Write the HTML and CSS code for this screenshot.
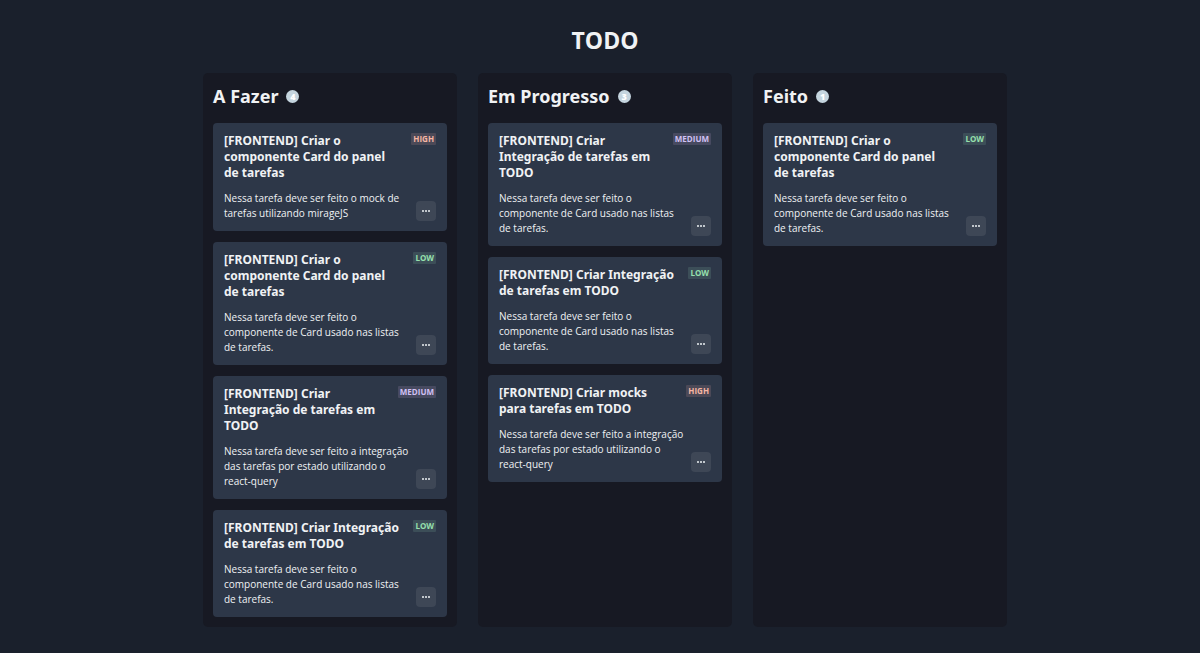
FILE: index.html
```html
<!DOCTYPE html>
<html lang="pt-BR">
<head>
<meta charset="utf-8">
<meta name="viewport" content="width=device-width, initial-scale=1">
<title>TODO</title>
<link rel="stylesheet" href="styles.css">
</head>
<body>
<main class="page">
  <h1 class="page-title">TODO</h1>
  <div class="board">
    <section class="column">
      <header class="column-header"><h2 class="column-title">A Fazer</h2><span class="count">4</span></header>
      <article class="card">
        <div class="card-text"><h3 class="card-title">[FRONTEND] Criar o<br>componente Card do panel<br>de tarefas</h3><p class="card-description">Nessa tarefa deve ser feito o mock de<br>tarefas utilizando mirageJS</p></div>
        <div class="card-side"><span class="badge badge-high">High</span><button class="menu-button" type="button" aria-label="Opções"><svg viewBox="0 0 20 20"><circle cx="7" cy="10" r="1"/><circle cx="10" cy="10" r="1"/><circle cx="13" cy="10" r="1"/></svg></button></div>
      </article>
      <article class="card">
        <div class="card-text"><h3 class="card-title">[FRONTEND] Criar o<br>componente Card do panel<br>de tarefas</h3><p class="card-description">Nessa tarefa deve ser feito o<br>componente de Card usado nas listas<br>de tarefas.</p></div>
        <div class="card-side"><span class="badge badge-low">Low</span><button class="menu-button" type="button" aria-label="Opções"><svg viewBox="0 0 20 20"><circle cx="7" cy="10" r="1"/><circle cx="10" cy="10" r="1"/><circle cx="13" cy="10" r="1"/></svg></button></div>
      </article>
      <article class="card">
        <div class="card-text"><h3 class="card-title">[FRONTEND] Criar<br>Integração de tarefas em<br>TODO</h3><p class="card-description">Nessa tarefa deve ser feito a integração<br>das tarefas por estado utilizando o<br>react-query</p></div>
        <div class="card-side"><span class="badge badge-medium">Medium</span><button class="menu-button" type="button" aria-label="Opções"><svg viewBox="0 0 20 20"><circle cx="7" cy="10" r="1"/><circle cx="10" cy="10" r="1"/><circle cx="13" cy="10" r="1"/></svg></button></div>
      </article>
      <article class="card">
        <div class="card-text"><h3 class="card-title">[FRONTEND] Criar Integração<br>de tarefas em TODO</h3><p class="card-description">Nessa tarefa deve ser feito o<br>componente de Card usado nas listas<br>de tarefas.</p></div>
        <div class="card-side"><span class="badge badge-low">Low</span><button class="menu-button" type="button" aria-label="Opções"><svg viewBox="0 0 20 20"><circle cx="7" cy="10" r="1"/><circle cx="10" cy="10" r="1"/><circle cx="13" cy="10" r="1"/></svg></button></div>
      </article>
    </section>
    <section class="column">
      <header class="column-header"><h2 class="column-title">Em Progresso</h2><span class="count">3</span></header>
      <article class="card">
        <div class="card-text"><h3 class="card-title">[FRONTEND] Criar<br>Integração de tarefas em<br>TODO</h3><p class="card-description">Nessa tarefa deve ser feito o<br>componente de Card usado nas listas<br>de tarefas.</p></div>
        <div class="card-side"><span class="badge badge-medium">Medium</span><button class="menu-button" type="button" aria-label="Opções"><svg viewBox="0 0 20 20"><circle cx="7" cy="10" r="1"/><circle cx="10" cy="10" r="1"/><circle cx="13" cy="10" r="1"/></svg></button></div>
      </article>
      <article class="card">
        <div class="card-text"><h3 class="card-title">[FRONTEND] Criar Integração<br>de tarefas em TODO</h3><p class="card-description">Nessa tarefa deve ser feito o<br>componente de Card usado nas listas<br>de tarefas.</p></div>
        <div class="card-side"><span class="badge badge-low">Low</span><button class="menu-button" type="button" aria-label="Opções"><svg viewBox="0 0 20 20"><circle cx="7" cy="10" r="1"/><circle cx="10" cy="10" r="1"/><circle cx="13" cy="10" r="1"/></svg></button></div>
      </article>
      <article class="card">
        <div class="card-text"><h3 class="card-title">[FRONTEND] Criar mocks<br>para tarefas em TODO</h3><p class="card-description">Nessa tarefa deve ser feito a integração<br>das tarefas por estado utilizando o<br>react-query</p></div>
        <div class="card-side"><span class="badge badge-high">High</span><button class="menu-button" type="button" aria-label="Opções"><svg viewBox="0 0 20 20"><circle cx="7" cy="10" r="1"/><circle cx="10" cy="10" r="1"/><circle cx="13" cy="10" r="1"/></svg></button></div>
      </article>
    </section>
    <section class="column">
      <header class="column-header"><h2 class="column-title">Feito</h2><span class="count">1</span></header>
      <article class="card">
        <div class="card-text"><h3 class="card-title">[FRONTEND] Criar o<br>componente Card do panel<br>de tarefas</h3><p class="card-description">Nessa tarefa deve ser feito o<br>componente de Card usado nas listas<br>de tarefas.</p></div>
        <div class="card-side"><span class="badge badge-low">Low</span><button class="menu-button" type="button" aria-label="Opções"><svg viewBox="0 0 20 20"><circle cx="7" cy="10" r="1"/><circle cx="10" cy="10" r="1"/><circle cx="13" cy="10" r="1"/></svg></button></div>
      </article>
    </section>
  </div>
</main>
</body>
</html>
```
FILE: styles.css
```css
* { box-sizing: border-box; }

body {
  margin: 0;
  background: #1a202c;
  color: #f0f2f4;
  font-family: "Segoe UI", "Open Sans", "Noto Sans", sans-serif;
}

h1, h2, h3, p { margin: 0; }

.page {
  padding: 25px 0 26px 10px;
}

.page-title {
  margin-bottom: 18px;
  font-size: 23px;
  line-height: 30px;
  text-align: center;
}

.board {
  display: grid;
  grid-template-columns: repeat(3, minmax(0, 1fr));
  gap: 21px;
  max-width: 804px;
  margin: 0 auto;
}

.column {
  display: flex;
  flex-direction: column;
  gap: 11px;
  padding: 10px;
  border-radius: 5px;
  background: #171923;
}

.column-header {
  display: flex;
  align-items: center;
  gap: 8px;
  height: 29px;
  padding-bottom: 2px;
}

.column-title {
  font-family: "Segoe UI", "Noto Sans", sans-serif;
  font-size: 18px;
  line-height: 27px;
}

.count {
  width: 13px;
  height: 13px;
  border-radius: 50%;
  background: #c5d5df;
  color: #ffffff;
  font-size: 9px;
  font-weight: 800;
  line-height: 13px;
  text-align: center;
}

.card {
  display: flex;
  justify-content: space-between;
  padding: 10px 11px;
  border-radius: 4px;
  background: #2d3748;
}

.card-text {
  display: flex;
  flex: 1;
  flex-direction: column;
  gap: 10px;
  min-width: 0;
  white-space: nowrap;
}

.card-title {
  font-family: "Segoe UI", "Noto Sans", sans-serif;
  font-size: 12px;
  line-height: 16px;
}

.card-description {
  font-size: 10px;
  line-height: 15px;
}

.card-side {
  display: flex;
  flex-direction: column;
  align-items: flex-end;
  justify-content: space-between;
}

.badge {
  padding: 0 2px;
  border-radius: 1px;
  font-size: 8px;
  font-weight: 700;
  line-height: 12px;
  text-transform: uppercase;
}

.badge-high { background: #4b4957; color: #f5b5a3; }
.badge-medium { background: #474a60; color: #d0c0f4; }
.badge-low { background: #3c4e58; color: #96e0ad; }

.menu-button {
  width: 20px;
  height: 20px;
  padding: 0;
  border: 0;
  border-radius: 4px;
  background: #3e4756;
}

.menu-button svg {
  display: block;
  fill: #edf0f3;
}
```
